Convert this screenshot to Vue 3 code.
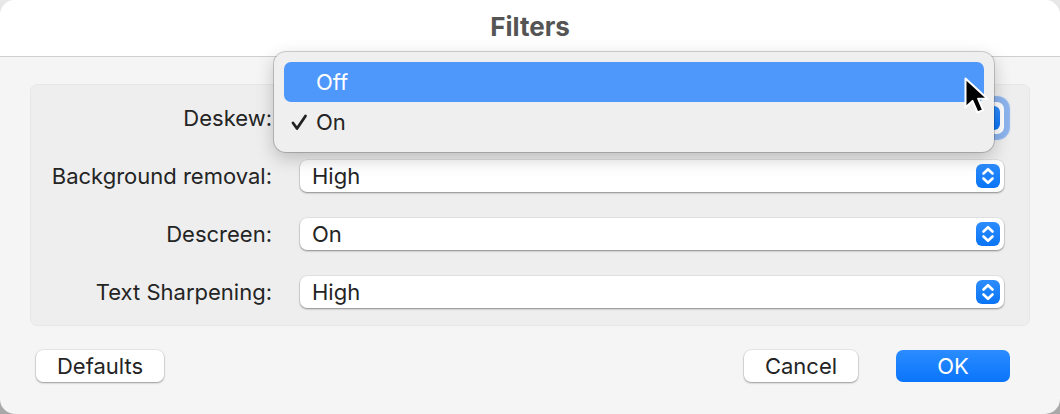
<script setup>
const rows = [
  { label: 'Deskew:', value: 'On', focused: true },
  { label: 'Background removal:', value: 'High' },
  { label: 'Descreen:', value: 'On' },
  { label: 'Text Sharpening:', value: 'High' },
]
</script>

<template>
  <div class="window">
    <header class="titlebar">Filters</header>
    <main class="body">
      <section class="panel">
        <div v-for="row in rows" :key="row.label" class="row">
          <span class="label">{{ row.label }}</span>
          <div class="select" :class="{ focused: row.focused }">
            <span class="value">{{ row.focused ? '' : row.value }}</span>
            <span class="stepper">
              <svg width="14" height="20" viewBox="0 0 14 20" fill="none" stroke="#fff" stroke-width="2.6" stroke-linecap="round" stroke-linejoin="round">
                <path d="M2.5 7.5 7 3.2l4.5 4.3" />
                <path d="M2.5 12.5 7 16.8l4.5-4.3" />
              </svg>
            </span>
          </div>
        </div>
      </section>
      <footer class="actions">
        <button class="btn defaults">Defaults</button>
        <div class="right">
          <button class="btn cancel">Cancel</button>
          <button class="btn ok">OK</button>
        </div>
      </footer>
    </main>

    <div class="menu">
      <div class="item active"><span class="check"></span>Off</div>
      <div class="item">
        <span class="check">
          <svg width="18" height="18" viewBox="0 0 18 18" fill="none" stroke="#222" stroke-width="2.8" stroke-linecap="round" stroke-linejoin="round">
            <path d="M3 10 7 15.5 15.5 3" />
          </svg>
        </span>On
      </div>
    </div>

    <svg class="cursor" width="28" height="40" viewBox="0 0 28 40">
      <path d="M1.5 1.5v29l7-6.6 5 11.6 5.6-2.4-5-11.4h9.4z" fill="#000" stroke="#fff" stroke-width="2" stroke-linejoin="round" />
    </svg>
  </div>
</template>

<style>
html, body { margin: 0; background: linear-gradient(#e8e8e8, #a8a8a8); }
</style>

<style scoped>
.window {
  position: relative;
  width: 1060px;
  height: 414px;
  border-radius: 15px;
  overflow: hidden;
  display: flex;
  flex-direction: column;
  background: #f5f5f5;
  font-family: Inter, "Liberation Sans", sans-serif;
  font-size: 22px;
  color: #242424;
}
.titlebar {
  flex: none;
  box-sizing: content-box;
  height: 45px;
  padding-top: 11px;
  text-align: center;
  background: #fff;
  border-bottom: 1px solid #cfcfcf;
  font-size: 26px;
  line-height: 32px;
  font-weight: 700;
  color: #555;
}
.body {
  flex: 1;
  display: flex;
  flex-direction: column;
  padding: 27px 30px 0;
}
.panel {
  box-sizing: border-box;
  height: 242px;
  padding: 17px 25px 0 0;
  display: flex;
  flex-direction: column;
  gap: 26px;
  background: #eeeeee;
  border: 1px solid #e7e7e7;
  border-radius: 7px;
}
.row {
  display: flex;
  align-items: center;
  gap: 28px;
  height: 32px;
}
.label {
  width: 241px;
  text-align: right;
  flex: none;
}
.select {
  flex: 1;
  height: 32px;
  box-sizing: border-box;
  display: flex;
  align-items: center;
  justify-content: space-between;
  padding: 0 4px 0 12px;
  background: #fff;
  border-radius: 7px;
  box-shadow: 0 0 0 .5px rgba(0,0,0,.08), 0 1px 2px rgba(0,0,0,.4);
}
.select.focused {
  box-shadow: 0 0 1px 6px #8db4ee;
}
.stepper {
  width: 24px;
  height: 24px;
  border-radius: 6px;
  display: flex;
  align-items: center;
  justify-content: center;
  background: linear-gradient(#2d8dfd, #0a74f5);
}
.actions {
  display: flex;
  justify-content: space-between;
  padding: 24px 20px 0 6px;
}
.right {
  display: flex;
  gap: 38px;
}
.btn {
  height: 32px;
  padding: 0;
  border: none;
  border-radius: 7px;
  font: inherit;
  color: inherit;
  background: #fff;
  box-shadow: 0 0 0 .5px rgba(0,0,0,.1), 0 1px 2px rgba(0,0,0,.35);
}
.defaults { width: 128px; }
.cancel { width: 114px; }
.ok {
  width: 114px;
  color: #fff;
  background: linear-gradient(#2a8cff, #0a75fb);
  box-shadow: none;
}
.menu {
  position: absolute;
  left: 274px;
  top: 52px;
  width: 720px;
  height: 100px;
  box-sizing: border-box;
  padding: 10px 10px;
  background: #efefef;
  border-radius: 12px;
  box-shadow: 0 0 0 1px rgba(0,0,0,.18), 0 6px 18px rgba(0,0,0,.22);
}
.item {
  height: 40px;
  display: flex;
  align-items: center;
  border-radius: 7px;
  padding-left: 6px;
}
.item.active {
  background: #4f98fb;
  color: #fff;
}
.check {
  width: 26px;
  flex: none;
  display: flex;
  align-items: center;
}
.cursor {
  position: absolute;
  left: 964px;
  top: 77px;
}
</style>
